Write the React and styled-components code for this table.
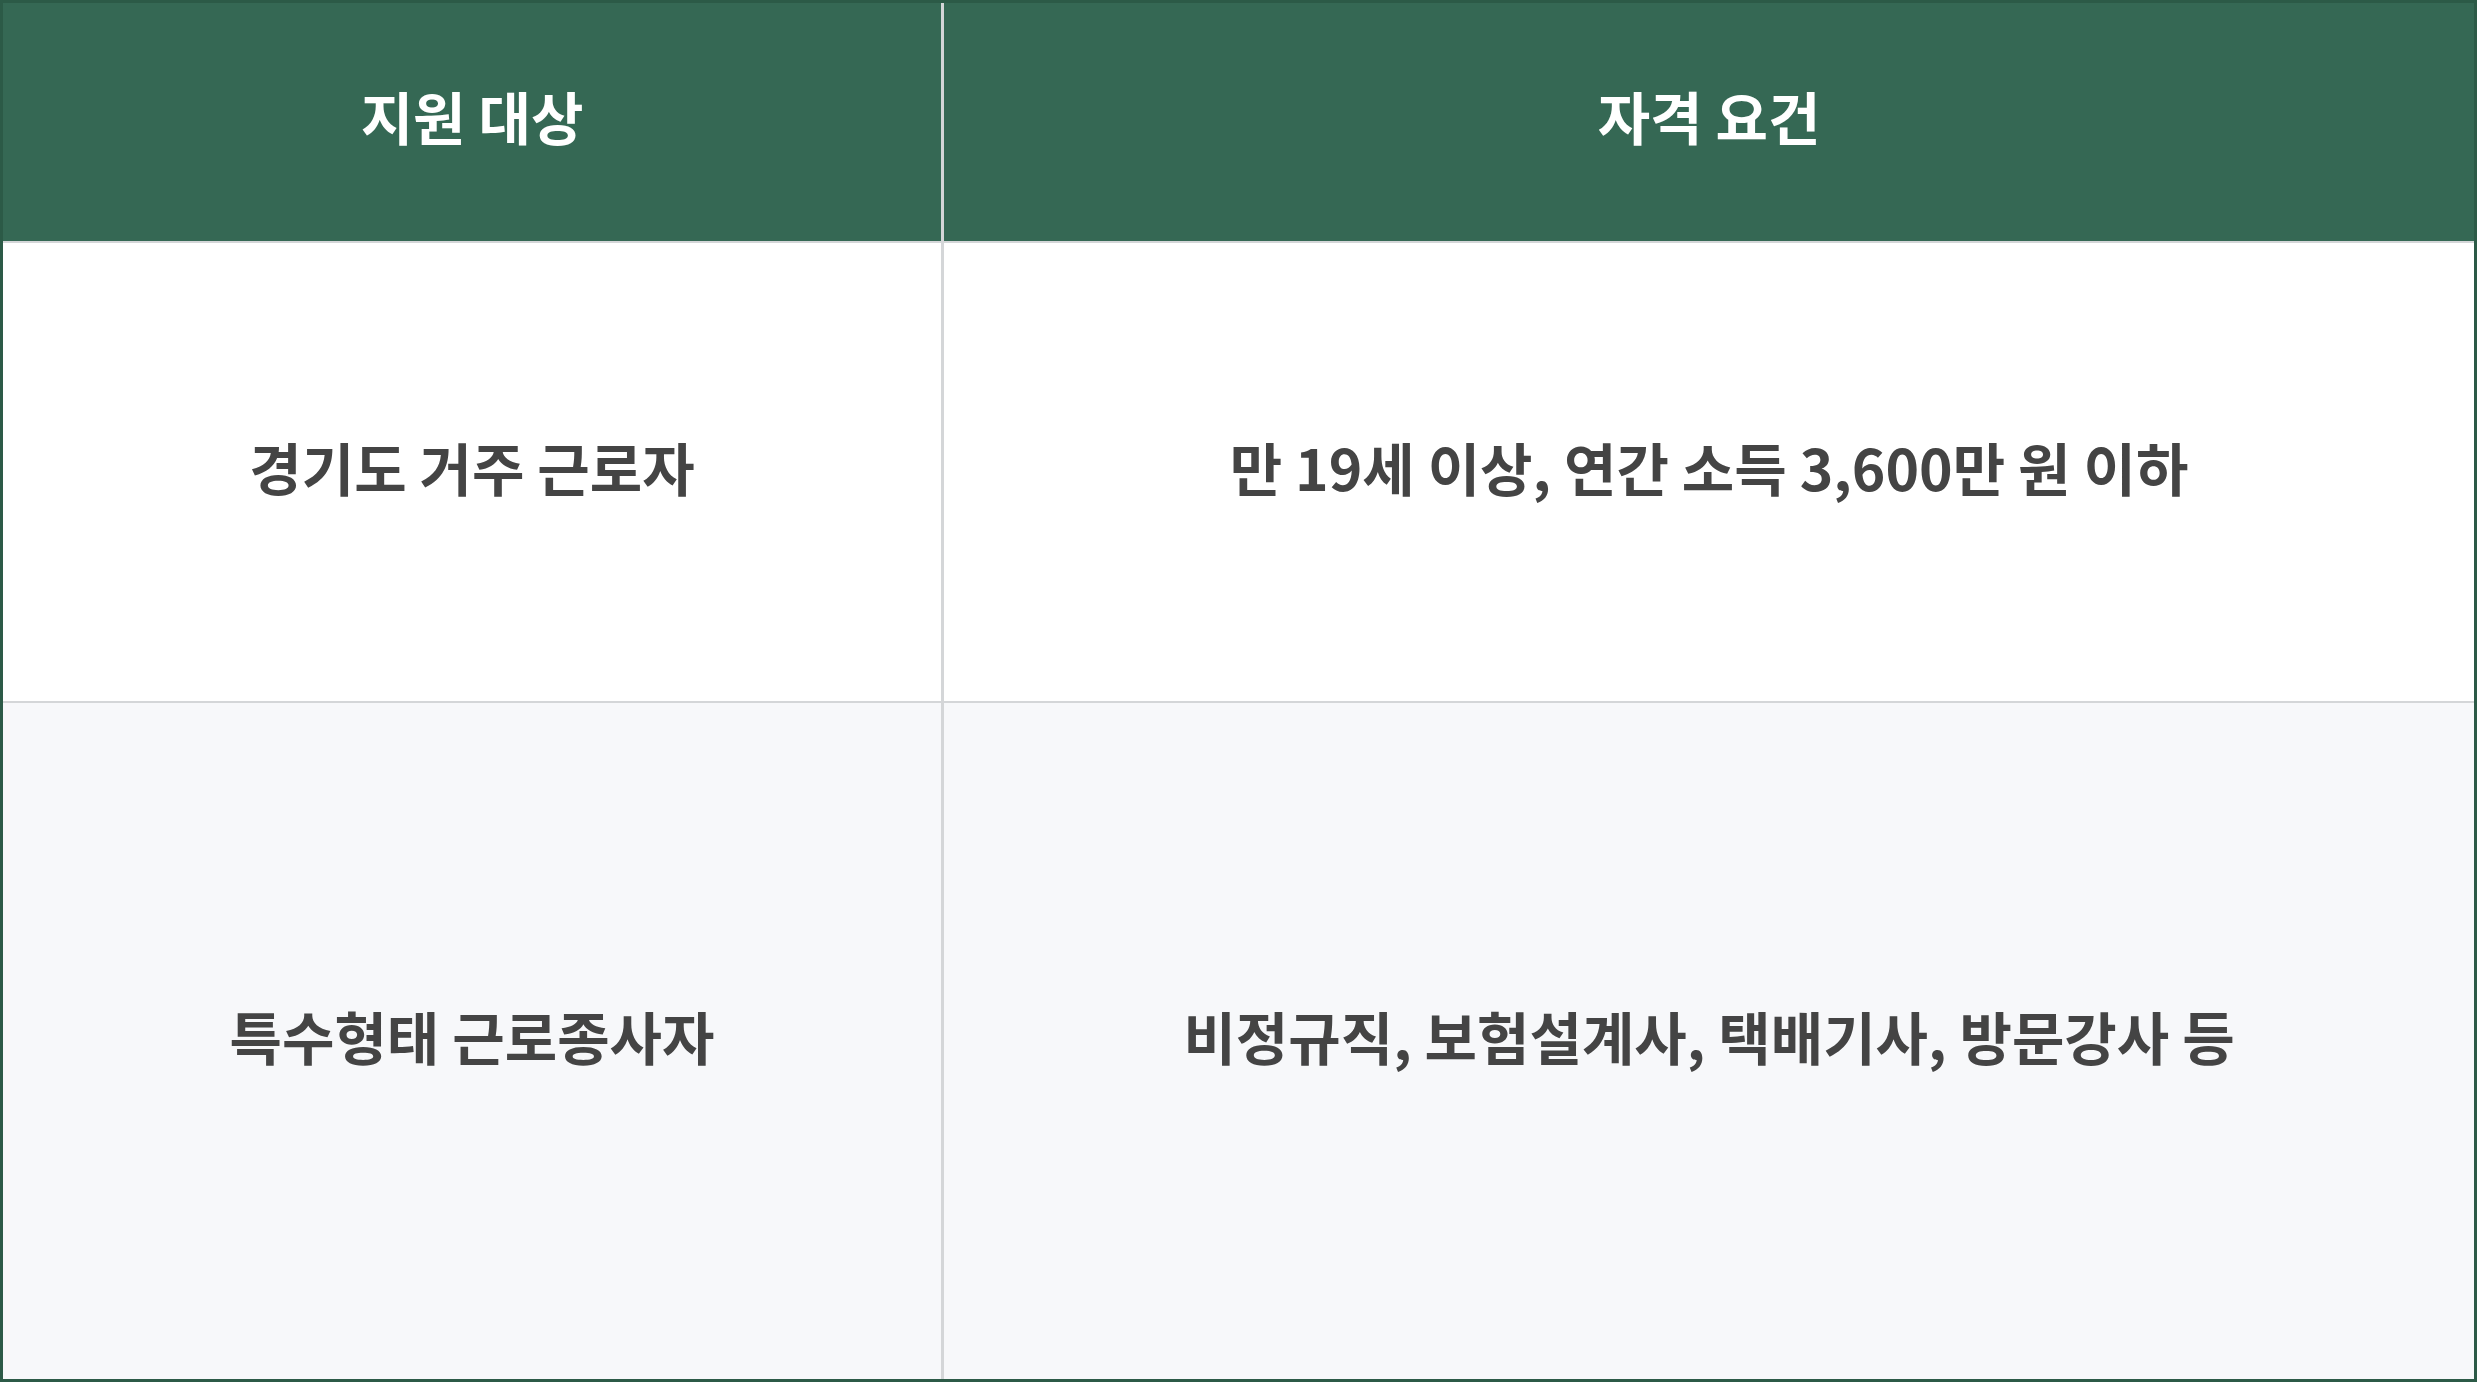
import React from "react";
import styled, { createGlobalStyle } from "styled-components";

const Global = createGlobalStyle`
  html, body { margin: 0; padding: 0; background: #ffffff; }
  body { font-family: "Noto Sans CJK KR", "Noto Sans", sans-serif; }
  * { box-sizing: border-box; }
`;

const Table = styled.div`
  width: 2477px;
  height: 1382px;
  border: 3px solid #2c5a47;
  display: grid;
  grid-template-columns: 938px 1fr;
  grid-template-rows: 240px 460px 1fr;
  background: #ffffff;
`;

const HeadCell = styled.div`
  background: #356854;
  color: #ffffff;
  font-size: 57px;
  font-weight: 700;
  display: flex;
  align-items: center;
  justify-content: center;
  padding-bottom: 14px;
  border-left: ${(p) => (p.$first ? "none" : "3px solid #d4d6d8")};
  border-bottom: 2px solid #d4d6d8;
`;

const Cell = styled.div`
  background: ${(p) => (p.$alt ? "#f7f8fa" : "#ffffff")};
  color: #444444;
  font-size: 57px;
  font-weight: 700;
  display: flex;
  align-items: center;
  justify-content: center;
  padding-bottom: 12px;
  border-left: ${(p) => (p.$first ? "none" : "3px solid #d4d6d8")};
  border-bottom: ${(p) => (p.$last ? "none" : "2px solid #d4d6d8")};
`;

const rows = [
  ["경기도 거주 근로자", "만 19세 이상, 연간 소득 3,600만 원 이하"],
  ["특수형태 근로종사자", "비정규직, 보험설계사, 택배기사, 방문강사 등"],
];

export default function App() {
  return (
    <>
      <Global />
      <Table>
        <HeadCell $first>지원 대상</HeadCell>
        <HeadCell>자격 요건</HeadCell>
        {rows.map((r, i) => (
          <React.Fragment key={i}>
            <Cell $first $alt={i % 2 === 1} $last={i === rows.length - 1}>
              {r[0]}
            </Cell>
            <Cell $alt={i % 2 === 1} $last={i === rows.length - 1}>
              {r[1]}
            </Cell>
          </React.Fragment>
        ))}
      </Table>
    </>
  );
}
